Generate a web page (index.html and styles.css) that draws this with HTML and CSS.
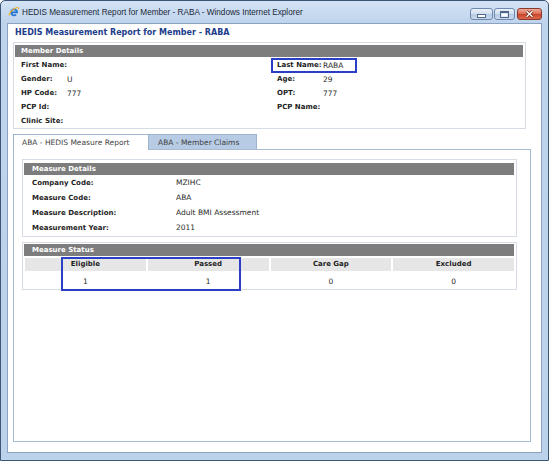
FILE: index.html
```html
<!DOCTYPE html>
<html lang="en">
<head>
    <meta charset="UTF-8">
    <title>HEDIS Measurement Report for Member - RABA</title>
    <link rel="stylesheet" href="styles.css">
</head>
<body>
    <div class="window">
        <div class="titlebar">
            <!-- IE logo -->
            <svg class="ie-icon" width="12" height="12" viewBox="0 0 16 16">
                <path d="M4.2 8.4h7.9a4 4 0 1 0-1.3 3" fill="none" stroke="#2173d3" stroke-width="2.3"/>
                <path d="M1.8 13C0.6 10.6 5.2 4.4 11.2 2.4c2.6-.9 3.6.3 2.6 2.2" fill="none" stroke="#f2b124" stroke-width="1.4"/>
            </svg>
            <span class="win-title">HEDIS Measurement Report for Member - RABA - Windows Internet Explorer</span>
            <div class="win-buttons">
                <span class="wbtn min"><i class="min-glyph"></i></span>
                <span class="wbtn max"><i class="max-glyph"></i></span>
                <span class="wbtn close">
                    <svg width="9" height="8" viewBox="0 0 9 8">
                        <path d="M1.5 1.2l6 5.6M7.5 1.2l-6 5.6" stroke="#5a1b10" stroke-width="2.6"/>
                        <path d="M1.5 1.2l6 5.6M7.5 1.2l-6 5.6" stroke="#fff" stroke-width="1.5"/>
                    </svg>
                </span>
            </div>
        </div>

        <div class="client">
            <div class="page-title">HEDIS Measurement Report for Member - RABA</div>

            <!-- member details -->
            <div class="box member">
                <div class="box-head">Member Details</div>
                <div class="member-grid">
                    <div class="field"><span class="lbl">First Name:</span><span class="val"></span></div>
                    <div class="field marked"><span class="lbl">Last Name:</span><span class="val">RABA</span><span class="hl hl-name"></span></div>
                    <div class="field"><span class="lbl">Gender:</span><span class="val">U</span></div>
                    <div class="field"><span class="lbl">Age:</span><span class="val">29</span></div>
                    <div class="field"><span class="lbl">HP Code:</span><span class="val">777</span></div>
                    <div class="field"><span class="lbl">OPT:</span><span class="val">777</span></div>
                    <div class="field"><span class="lbl">PCP Id:</span><span class="val"></span></div>
                    <div class="field"><span class="lbl">PCP Name:</span><span class="val"></span></div>
                    <div class="field"><span class="lbl">Clinic Site:</span><span class="val"></span></div>
                </div>
            </div>

            <!-- tabs -->
            <div class="tabs">
                <a href="javascript:;" class="tab active">ABA - HEDIS Measure Report</a>
                <a href="javascript:;" class="tab">ABA - Member Claims</a>
            </div>

            <div class="panel">
                <div class="box details">
                    <div class="box-head">Measure Details</div>
                    <div class="detail-row"><span class="lbl">Company Code:</span><span class="val">MZIHC</span></div>
                    <div class="detail-row"><span class="lbl">Measure Code:</span><span class="val">ABA</span></div>
                    <div class="detail-row"><span class="lbl">Measure Description:</span><span class="val">Adult BMI Assessment</span></div>
                    <div class="detail-row"><span class="lbl">Measurement Year:</span><span class="val">2011</span></div>
                </div>

                <div class="box status">
                    <div class="box-head">Measure Status</div>
                    <div class="status-table">
                        <div class="th">Eligible</div>
                        <div class="th">Passed</div>
                        <div class="th">Care Gap</div>
                        <div class="th">Excluded</div>
                        <div class="td">1</div>
                        <div class="td">1</div>
                        <div class="td">0</div>
                        <div class="td">0</div>
                    </div>
                    <span class="hl hl-status"></span>
                </div>
            </div>
        </div>
    </div>
</body>
</html>
```

FILE: styles.css
```css
body{
    margin: 0;
    font-family: "DejaVu Sans", Verdana, sans-serif;
    color: #222;
}
.window{
    width: 549px;
    height: 461px;
    box-sizing: border-box;
    border: 1px solid #3b5676;
    border-radius: 5px 5px 0 0;
    background: linear-gradient(180deg, #d3e3f4 0, #bed3ec 22px, #bcd2eb 100%);
    padding: 0 6px 7px;
    display: flex;
    flex-direction: column;
}
.titlebar{
    height: 22px;
    display: flex;
    align-items: center;
    gap: 2px;
    padding-left: 1px;
}
.win-title{
    font-family: "Liberation Sans", Arial, sans-serif;
    font-size: 8.2px;
    color: #1c2838;
}
.win-buttons{
    margin-left: auto;
    align-self: flex-start;
    margin-top: 7px;
    display: flex;
    gap: 1px;
}
.wbtn{
    height: 12px;
    box-sizing: border-box;
    border: 1px solid #6f89ad;
    border-radius: 3px;
    background: linear-gradient(180deg, #eaf1f9 0, #d0deef 50%, #b5cae4 51%, #c9daee 100%);
    display: flex;
    align-items: center;
    justify-content: center;
}
.wbtn.min{ width: 23px; }
.wbtn.max{ width: 21px; }
.wbtn.close{
    width: 25px;
    margin-left: 1px;
    border-color: #8a3a2c;
    background: linear-gradient(180deg, #efab9b 0, #da6a50 50%, #c8442a 51%, #d9684c 100%);
}
.min-glyph{
    width: 7px;
    height: 2px;
    margin-top: 4px;
    background: #fff;
    border: 1px solid #4f6686;
}
.max-glyph{
    width: 7px;
    height: 4px;
    border: 1px solid #4f6686;
    border-top-width: 2px;
    background: #fff;
    box-shadow: inset 0 0 0 1px #dfe8f3;
}

/* client area */
.client{
    flex: 1;
    background: #fff;
    border: 1px solid #8aa2c0;
    padding: 2px 10px 10px 5px;
    display: flex;
    flex-direction: column;
}
.page-title{
    font-weight: bold;
    font-size: 8px;
    line-height: 14px;
    color: #223d8c;
    padding-left: 2px;
    margin-bottom: 2px;
}
.box{
    border: 1px solid #d6dce4;
    position: relative;
}
.box-head{
    height: 12px;
    line-height: 12px;
    background: #7d7d7d;
    color: #fff;
    font-weight: bold;
    font-size: 7px;
}
.lbl{
    font-weight: bold;
    font-size: 7px;
    color: #1e1e1e;
}
.val{
    font-size: 7.5px;
    color: #2a2a2a;
}

/* member details */
.member{
    margin-right: 5px;
    padding: 2px 2px 0 1px;
}
.member .box-head{
    padding-left: 6px;
}
.member-grid{
    margin-top: 1px;
    padding-left: 6px;
    display: grid;
    grid-template-columns: 256px 1fr;
}
.field{
    height: 14px;
    display: flex;
    align-items: center;
    position: relative;
}
.field .lbl{
    width: 46px;
    flex: none;
}
.hl{
    position: absolute;
    border: 2px solid #2b3ec6;
    box-sizing: border-box;
}
.hl-name{
    left: -6px;
    top: 0;
    width: 86px;
    height: 15px;
}

/* tabs */
.tabs{
    margin-top: 5px;
    display: flex;
    align-items: flex-end;
    position: relative;
    z-index: 2;
}
.tab{
    height: 15px;
    line-height: 15px;
    box-sizing: border-box;
    font-size: 7.5px;
    color: #3e3e3e;
    text-decoration: none;
    border: 1px solid #9fb4ce;
    border-bottom: none;
    background: #b7cbe4;
}
.tab.active{
    width: 136px;
    padding-left: 8px;
    height: 16px;
    margin-bottom: -1px;
    background: #fff;
    color: #444;
}
.tab:not(.active){
    width: 108px;
    padding-left: 9px;
    border-left: none;
}

.panel{
    flex: 1;
    border: 1px solid #a7bbd3;
    padding: 9px 13px 0 8px;
}
.details{
    padding: 3px 2px 1px 1px;
}
.details .box-head,
.status .box-head{
    padding-left: 8px;
}
.detail-row{
    height: 15px;
    display: flex;
    align-items: center;
    padding-left: 8px;
}
.detail-row .lbl{
    width: 144px;
    flex: none;
}

/* measure status */
.status{
    margin-top: 5px;
    padding: 1px 2px 1px 1px;
}
.status-table{
    margin: 2px 0 0 1px;
    display: grid;
    grid-template-columns: repeat(4, 1fr);
    column-gap: 2px;
}
.th{
    height: 13px;
    line-height: 13px;
    background: #e6e6e6;
    text-align: center;
    font-weight: bold;
    font-size: 7px;
    color: #1e1e1e;
}
.td{
    height: 17px;
    line-height: 21px;
    text-align: center;
    font-size: 7.5px;
    color: #2a2a2a;
}
.hl-status{
    left: 38px;
    top: 14px;
    width: 180px;
    height: 34px;
}
```
